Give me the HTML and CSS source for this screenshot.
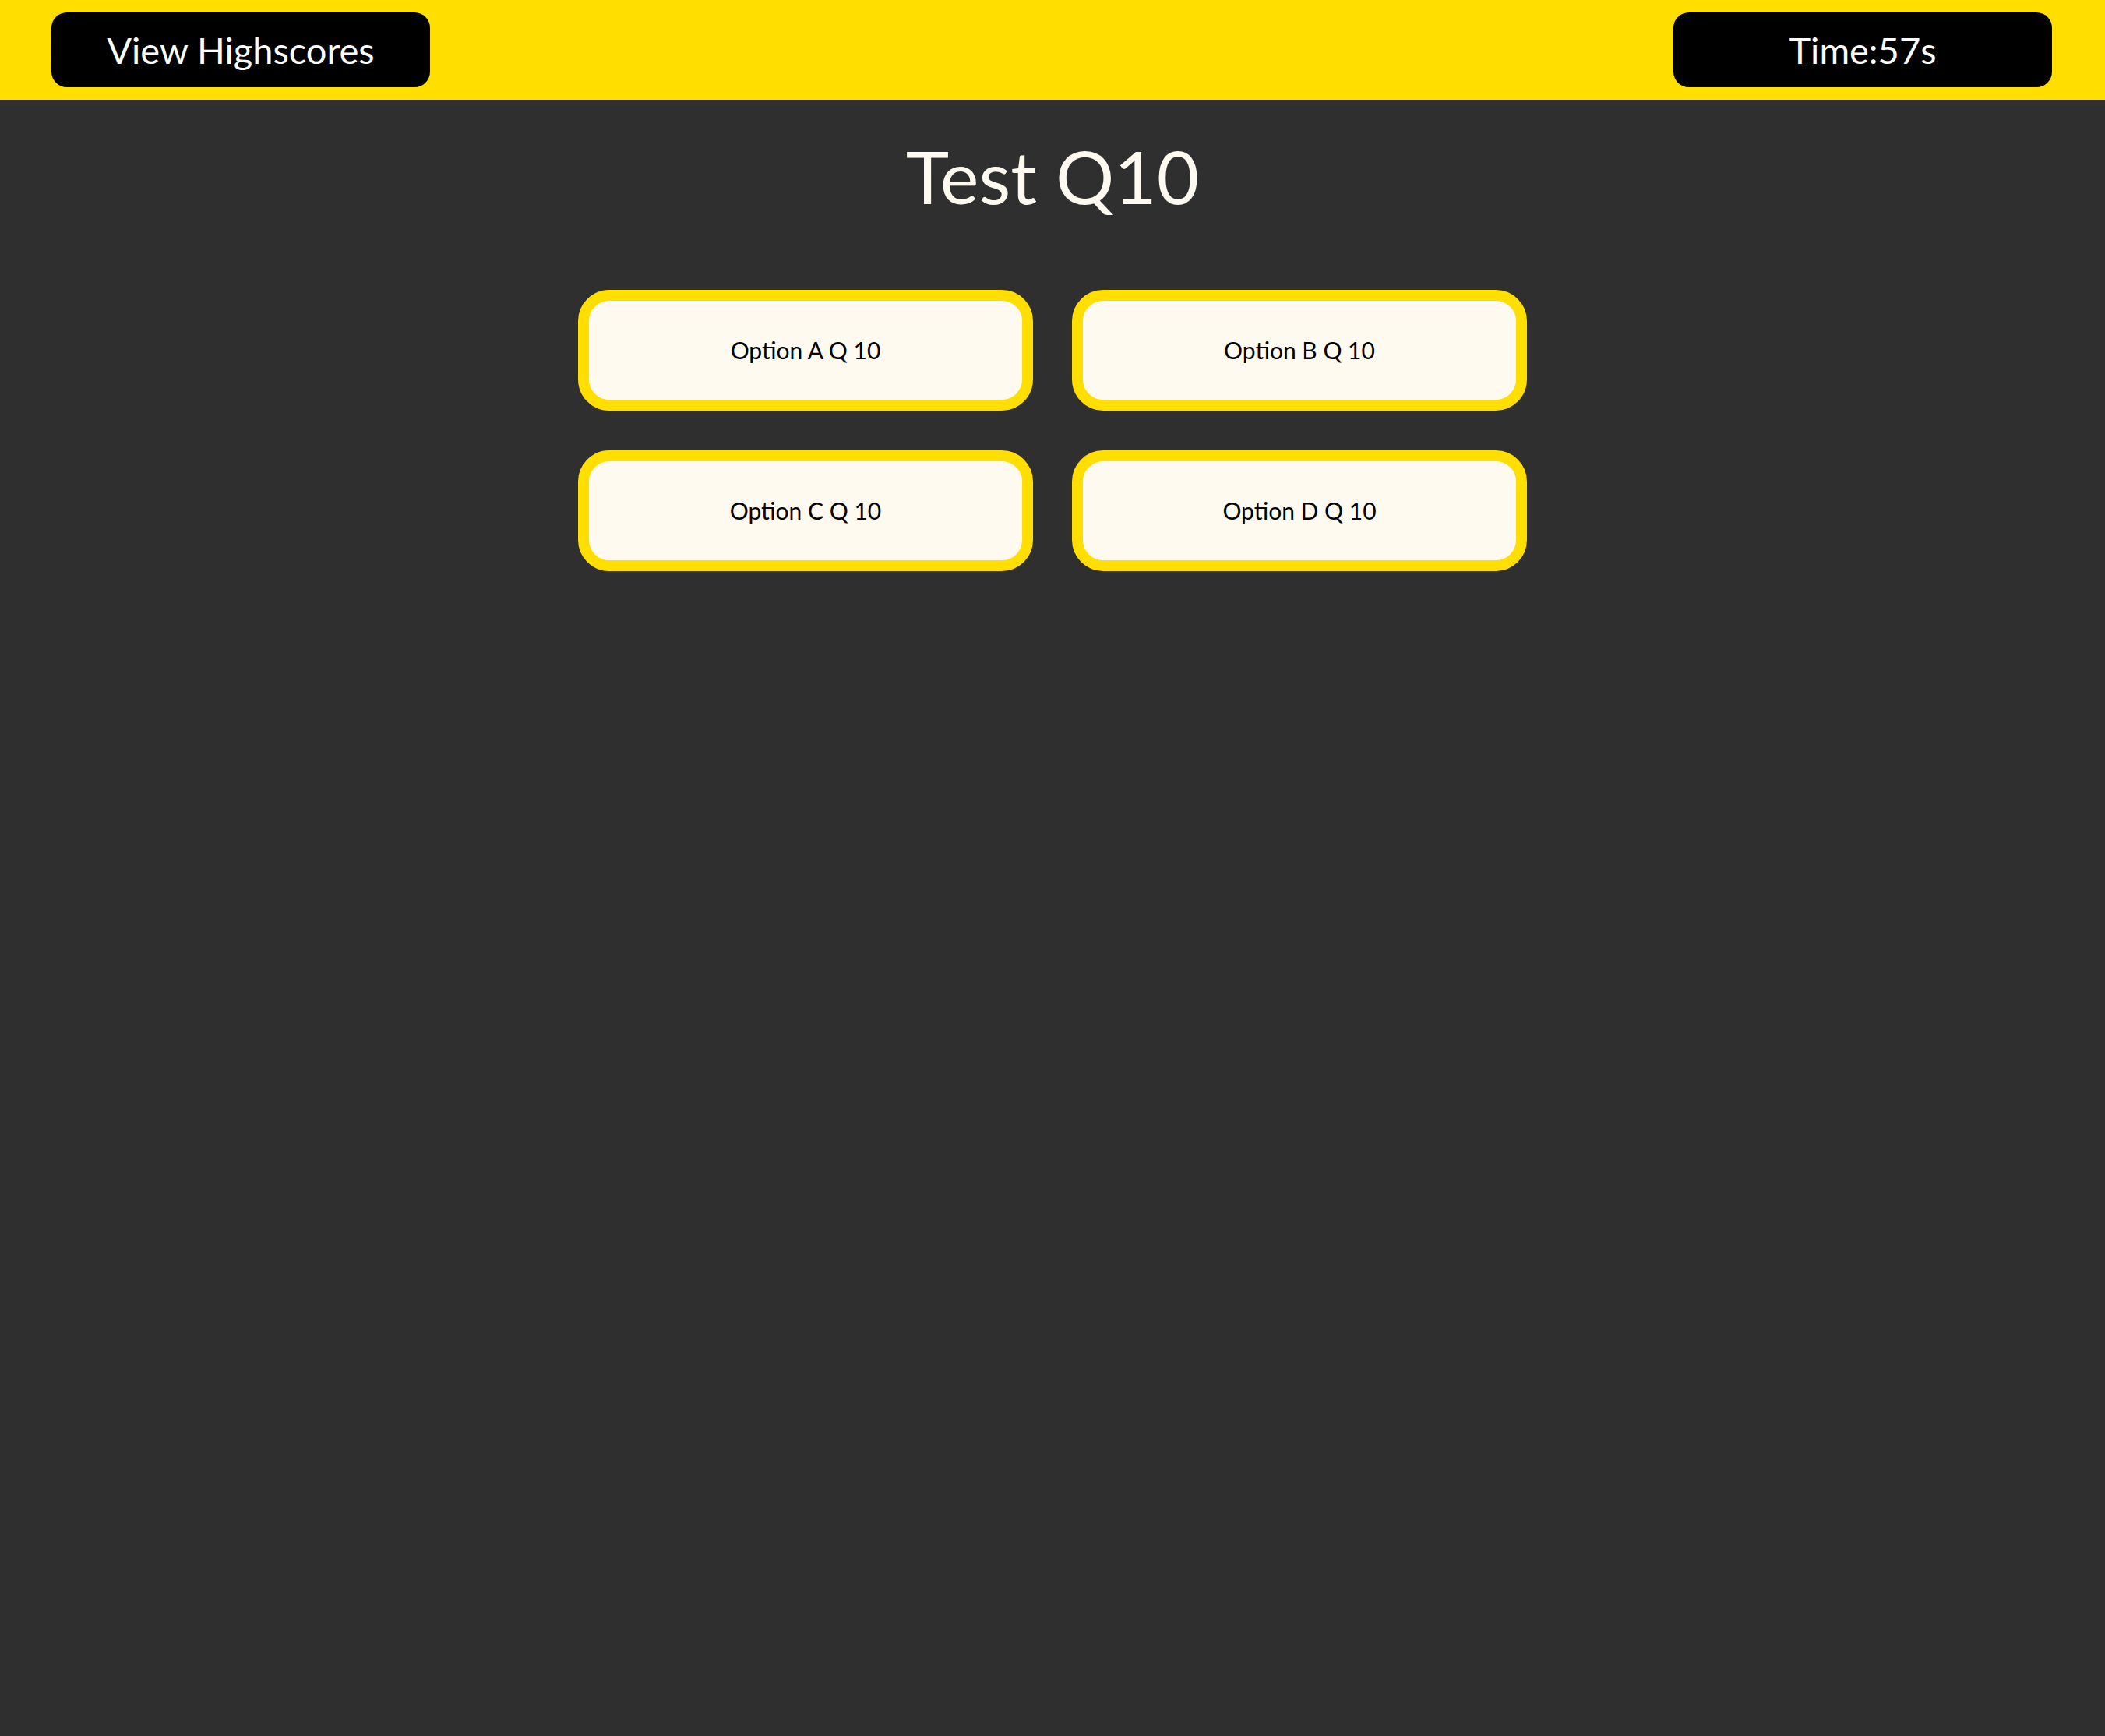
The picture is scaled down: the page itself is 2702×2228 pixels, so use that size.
FILE: index.html
```html
<!DOCTYPE html>
<html lang="en">
<head>
<meta charset="utf-8">
<title>Quiz</title>
<link rel="stylesheet" href="styles.css">
</head>
<body>
<header class="topbar">
  <button class="pill">View Highscores</button>
  <div class="pill timer">Time:57s</div>
</header>
<main class="quiz">
  <h1 class="question">Test Q10</h1>
  <div class="options">
    <button class="option">Option A Q 10</button>
    <button class="option">Option B Q 10</button>
    <button class="option">Option C Q 10</button>
    <button class="option">Option D Q 10</button>
  </div>
</main>
</body>
</html>
```
FILE: styles.css
```css
html, body {
  margin: 0;
  padding: 0;
  background: #2f2f2f;
  font-family: "Lato", "Open Sans", sans-serif;
  min-height: 100vh;
}
.topbar {
  height: 128px;
  box-sizing: border-box;
  background: #ffde00;
  display: flex;
  justify-content: space-between;
  align-items: center;
  padding: 0 68px 0 66px;
}
.pill {
  width: 486px;
  height: 96px;
  box-sizing: border-box;
  background: #000;
  color: #fff;
  border: none;
  border-radius: 20px;
  font-family: inherit;
  font-size: 47px;
  display: flex;
  align-items: center;
  justify-content: center;
  padding: 0;
}
.quiz {
  display: flex;
  flex-direction: column;
  align-items: center;
}
.question {
  margin: 42px 0 0;
  color: #fffaf0;
  font-weight: 400;
  font-size: 94px;
  line-height: 1.2;
}
.options {
  margin-top: 89px;
  display: grid;
  grid-template-columns: 584px 584px;
  column-gap: 50px;
  row-gap: 51px;
}
.option {
  height: 155px;
  box-sizing: border-box;
  background: #fffaf0;
  border: 14px solid #ffde00;
  border-radius: 40px;
  font-family: inherit;
  font-size: 30px;
  color: #000;
  padding: 0;
}
```
